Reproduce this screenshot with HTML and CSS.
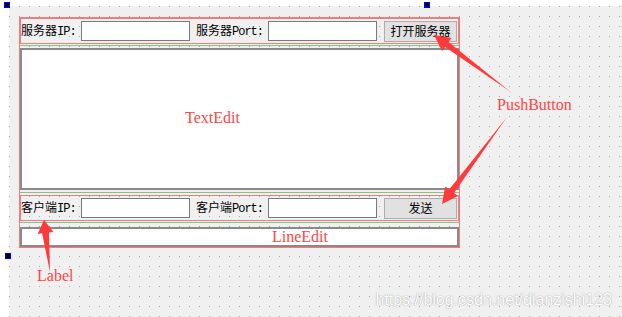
FILE: index.html
```html
<!DOCTYPE html>
<html lang="zh-CN">
<head>
  <meta charset="UTF-8">
  <title>TCP 通信 - 界面布局</title>
  <link rel="stylesheet" href="styles.css">
</head>
<body>

<div class="canvas">
  <div class="form">
    <div class="row">
      <span class="label label-ip">服务器<span class="lat">IP:</span></span>
      <div class="edit"></div>
      <span class="label label-port">服务器<span class="lat">Port:</span></span>
      <div class="edit"></div>
      <button class="push">打开服务器</button>
    </div>
    <div class="guide"></div>
    <div class="text-edit"></div>
    <div class="guide guide-mid"></div>
    <div class="row">
      <span class="label label-ip">客户端<span class="lat">IP:</span></span>
      <div class="edit"></div>
      <span class="label label-port">客户端<span class="lat">Port:</span></span>
      <div class="edit"></div>
      <button class="push">发送</button>
    </div>
    <div class="guide guide-low"></div>
    <div class="line-edit"></div>
  </div>
</div>

<!-- resize handles -->
<span class="handle handle-tl"></span>
<span class="handle handle-tr"></span>
<span class="handle handle-bl"></span>

<!-- annotations -->
<div class="note note-text">TextEdit</div>
<div class="note note-push">PushButton</div>
<div class="note note-label">Label</div>
<div class="note note-line">LineEdit</div>

<svg class="arrows" width="622" height="317" viewBox="0 0 622 317">
  <polygon points="512,93 448.6,42.1 451.6,38.1 434,35 442.1,51 445.1,47"/>
  <polygon points="507,117 449.2,189.4 445.2,186.4 442,204 458,196 454,193"/>
  <polygon points="50,272 49,232.5 53.5,232 44,220 37.6,233.9 42.1,233.3"/>
</svg>

<div class="watermark">https://blog.csdn.net/dianzishi123</div>

</body>
</html>
```

FILE: styles.css
```css
body {
  margin: 0;
  background: #fff;
  font-family: "Noto Sans CJK SC", sans-serif;
  font-size: 12px;
  position: relative;
  width: 622px;
  height: 317px;
  overflow: hidden;
}

/* designer canvas with grid dots */
.canvas {
  margin: 6px 0 0 9px;
  height: 311px;
  background-color: #f0f0f0;
  background-image: conic-gradient(at 1px 1px, transparent 270deg, #a4a4a4 0);
  background-size: 10px 10px;
  overflow: hidden;
  padding-top: 11px;
  padding-left: 10px;
  box-sizing: border-box;
}

.form {
  width: 441px;
  height: 231px;
  border: 1px solid #f27c7c;
  box-sizing: border-box;
  display: flex;
  flex-direction: column;
}

.row {
  height: 26px;
  border: 1px solid #f27c7c;
  box-sizing: border-box;
  display: flex;
  align-items: center;
}

.label {
  color: #000;
  white-space: nowrap;
  line-height: 14px;
}

.lat {
  font-family: "Liberation Mono", monospace;
  font-size: 12px;
  letter-spacing: -1px;
}

.label-ip {
  width: 60px;
}

.label-port {
  width: 72px;
  margin-left: 6px;
}

.edit {
  width: 109px;
  height: 20px;
  background: #fff;
  border: 1px solid #7a7a7a;
  box-sizing: border-box;
}

.push {
  width: 73px;
  height: 21px;
  margin-left: 7px;
  padding: 0;
  background: #e1e1e1;
  border: 1px solid #adadad;
  font-family: "Noto Sans CJK SC", sans-serif;
  font-size: 12px;
  color: #000;
  line-height: 16px;
}

.guide {
  height: 1px;
  background: #84c484;
  margin: 1px 0 2px;
}

.guide-mid {
  margin: 2px 0 2px;
}

.guide-low {
  margin: 1px 0 4px;
}

.text-edit {
  height: 142px;
  background: #fff;
  border: 2px solid #8a8a8a;
  box-sizing: border-box;
}

.line-edit {
  height: 20px;
  background: #fff;
  border: 2px solid #8a8a8a;
  box-sizing: border-box;
}

/* selection handles */
.handle {
  position: absolute;
  width: 6px;
  height: 6px;
  background: #000;
  border: 1px solid #0000ff;
  box-sizing: border-box;
}

.handle-tl { left: 4px; top: 2px; }
.handle-tr { left: 424px; top: 2px; }
.handle-bl { left: 5px; top: 253px; }

/* red notes */
.note {
  position: absolute;
  font-family: "Liberation Serif", serif;
  font-size: 16px;
  line-height: 18px;
  color: #ff4646;
}

.note-text { left: 185px; top: 109px; }
.note-push { left: 497px; top: 96px; }
.note-label { left: 37px; top: 267px; }
.note-line { left: 272px; top: 228px; }

.arrows {
  position: absolute;
  left: 0;
  top: 0;
  pointer-events: none;
}

.arrows polygon {
  fill: #ff3a3a;
}

.watermark {
  position: absolute;
  right: 10px;
  top: 291px;
  font-family: "Liberation Sans", sans-serif;
  font-size: 16px;
  line-height: 18px;
  color: #fff;
  text-shadow: 0 0 1px rgba(0, 0, 0, 0.35), 0 0 2px rgba(0, 0, 0, 0.12);
  white-space: nowrap;
}
```
